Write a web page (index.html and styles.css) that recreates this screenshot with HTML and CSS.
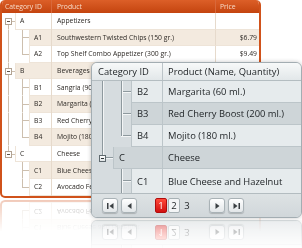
FILE: index.html
```html
<!DOCTYPE html>
<html>
  <head>
    <meta charset="utf-8">
    <meta name="viewport" content="width=device-width,initial-scale=1.0">
    <title>Hierarchical grid</title>
    <link rel="stylesheet" href="styles.css">
  </head>

  <body>
    <div class="stage">

      <!-- Orange grid (back) -->
      <div class="orders">
        <div class="o-head">
          <div class="o-hcell">Category ID</div>
          <div class="o-hcell">Product</div>
          <div class="o-hcell">Price</div>
        </div>
        <div class="o-body">
          <div class="o-row">
            <div class="o-cat"><span class="ind rb cn"><i class="exp"></i></span><span class="key">A</span></div>
            <div class="o-prod">Appetizers</div>
            <div class="o-price"></div>
          </div>
          <div class="o-row">
            <div class="o-cat"><span class="ind l1 rt rb ct cb br"></span><span class="key">A1</span></div>
            <div class="o-prod">Southwestern Twisted Chips (150 gr.)</div>
            <div class="o-price">$6.79</div>
          </div>
          <div class="o-row">
            <div class="o-cat"><span class="ind l1 rt rb ct br"></span><span class="key">A2</span></div>
            <div class="o-prod">Top Shelf Combo Appetizer (300 gr.)</div>
            <div class="o-price">$9.49</div>
          </div>
          <div class="o-row">
            <div class="o-cat"><span class="ind rt rb cn"><i class="exp"></i></span><span class="key">B</span></div>
            <div class="o-prod">Beverages</div>
            <div class="o-price"></div>
          </div>
          <!-- rows below are mostly covered by the front grid -->
          <div class="o-row">
            <div class="o-cat"><span class="ind l1 rt rb ct cb br"></span><span class="key">B1</span></div>
            <div class="o-prod">Sangria (90 ml.)</div>
            <div class="o-price"></div>
          </div>
          <div class="o-row">
            <div class="o-cat"><span class="ind l1 rt rb ct cb br"></span><span class="key">B2</span></div>
            <div class="o-prod">Margarita (60 ml.)</div>
            <div class="o-price"></div>
          </div>
          <div class="o-row">
            <div class="o-cat"><span class="ind l1 rt rb ct cb br"></span><span class="key">B3</span></div>
            <div class="o-prod">Red Cherry Boost (200 ml.)</div>
            <div class="o-price"></div>
          </div>
          <div class="o-row">
            <div class="o-cat"><span class="ind l1 rt rb ct br"></span><span class="key">B4</span></div>
            <div class="o-prod">Mojito (180 ml.)</div>
            <div class="o-price"></div>
          </div>
          <div class="o-row">
            <div class="o-cat"><span class="ind rt cn"><i class="exp"></i></span><span class="key">C</span></div>
            <div class="o-prod">Cheese</div>
            <div class="o-price"></div>
          </div>
          <div class="o-row">
            <div class="o-cat"><span class="ind l1 ct cb br"></span><span class="key">C1</span></div>
            <div class="o-prod">Blue Cheese and Hazelnut</div>
            <div class="o-price"></div>
          </div>
          <div class="o-row">
            <div class="o-cat"><span class="ind l1 ct br"></span><span class="key">C2</span></div>
            <div class="o-prod">Avocado Feta Spread</div>
            <div class="o-price"></div>
          </div>
        </div>
      </div>

      <!-- Gray grid (front) -->
      <div class="grid">
        <div class="g-head">
          <div class="g-hcell">Category ID</div>
          <div class="g-hcell">Product (Name, Quantity)</div>
        </div>
        <div class="g-body">
          <div class="g-row">
            <div class="g-cat"><span class="gind l1 rt rb ct cb br"></span><span class="gkey">B2</span></div>
            <div class="g-prod">Margarita (60 ml.)</div>
          </div>
          <div class="g-row">
            <div class="g-cat"><span class="gind l1 rt rb ct cb br"></span><span class="gkey">B3</span></div>
            <div class="g-prod">Red Cherry Boost (200 ml.)</div>
          </div>
          <div class="g-row">
            <div class="g-cat"><span class="gind l1 rt rb ct br"></span><span class="gkey">B4</span></div>
            <div class="g-prod">Mojito (180 ml.)</div>
          </div>
          <div class="g-row">
            <div class="g-cat"><span class="gind rt cn"><i class="gexp"></i></span><span class="gkey">C</span></div>
            <div class="g-prod">Cheese</div>
          </div>
          <div class="g-row last">
            <div class="g-cat"><span class="gind l1 ct cb br"></span><span class="gkey">C1</span></div>
            <div class="g-prod">Blue Cheese and Hazelnut</div>
          </div>
        </div>
        <div class="pager">
          <span class="pbtn">
            <svg width="7" height="6" viewBox="0 0 7 6"><rect x="0" y="0" width="1.5" height="6"/><path d="M6.5 0 L2.5 3 L6.5 6z"/></svg>
          </span>
          <span class="pbtn">
            <svg width="5" height="6" viewBox="0 0 5 6"><path d="M4.5 0 L0.5 3 L4.5 6z"/></svg>
          </span>
          <span class="pages">
            <span class="page cur">1</span>
            <span class="page hover">2</span>
            <span class="page">3</span>
          </span>
          <span class="pbtn next">
            <svg width="5" height="6" viewBox="0 0 5 6"><path d="M0.5 0 L4.5 3 L0.5 6z"/></svg>
          </span>
          <span class="pbtn">
            <svg width="7" height="6" viewBox="0 0 7 6"><path d="M0.5 0 L4.5 3 L0.5 6z"/><rect x="5.5" y="0" width="1.5" height="6"/></svg>
          </span>
        </div>
      </div>

    </div>
  </body>
</html>
```

FILE: styles.css
```css
body { margin: 0; background: #fff; font-family: "Open Sans", "Noto Sans", sans-serif; }

.stage {
  display: grid;
  width: 302px;
  height: 248px;
  overflow: hidden;
}
.orders, .grid { grid-area: 1 / 1; align-self: start; justify-self: start; }

/* Orange grid */
.orders {
  width: 261px;
  box-sizing: border-box;
  border: 2px solid #d0521b;
  border-top: 0;
  border-radius: 5px;
  overflow: hidden;
  background: #fff;
  font-size: 6.8px;
  color: #2e2a26;
  -webkit-box-reflect: below 2px linear-gradient(transparent 84%, rgba(255,255,255,0.3));
}
.o-head {
  display: grid;
  grid-template-columns: 50px 164px 43px;
  height: 13px;
  background: linear-gradient(#dc5f28, #c4440f);
  color: #f7dbc8;
}
.o-hcell { display: flex; align-items: center; padding-left: 5px; border-right: 1px solid #d9683a; }
.o-hcell:first-child { padding-left: 3px; }
.o-hcell:last-child { padding-left: 4px; border-right: 0; }

.o-row {
  display: grid;
  grid-template-columns: 50px 164px 43px;
  height: 16.6px;
}
.o-cat { display: flex; border-right: 1px solid #e6dacc; }
.o-prod, .o-price, .key {
  display: flex;
  align-items: center;
  border-bottom: 1px solid #eee4d8;
  box-sizing: border-box;
}
.o-prod { padding-left: 5px; border-right: 1px solid #e6dacc; white-space: nowrap; overflow: hidden; }
.o-price { justify-content: flex-end; padding-right: 2px; }
.key { flex: 1; padding-left: 4px; border-left: 1px solid #eee4d8; }
.o-row:nth-child(even) .key,
.o-row:nth-child(even) .o-prod,
.o-row:nth-child(even) .o-price { background: #f3eadf; }

/* tree lines, switched on per row */
.ind, .gind {
  flex: none;
  display: flex;
  align-items: center;
  background-image: var(--rt, none), var(--rb, none), var(--ct, none), var(--cb, none), var(--br, none), var(--cn, none);
  background-repeat: no-repeat;
}
.rt { --rt: var(--lv); }
.rb { --rb: var(--lv); }
.ct { --ct: var(--lv); }
.cb { --cb: var(--lv); }
.br { --br: var(--lh); }
.cn { --cn: var(--lh); }

.ind {
  --lv: linear-gradient(#cdbfae, #cdbfae);
  --lh: linear-gradient(#cdbfae, #cdbfae);
  width: 13px;
  padding-left: 3px;
  box-sizing: border-box;
  background-position: 6px 0, 6px 100%, 20px 0, 20px 100%, 20px 50%, 10px 50%;
  background-size: 1px 50%, 1px 50%, 1px 50%, 1px 50%, 7px 1px, 3px 1px;
}
.ind.l1 { width: 27px; }
.exp {
  width: 7px;
  height: 7px;
  box-sizing: border-box;
  border: 1px solid #b2a393;
  background: linear-gradient(#5a5148, #5a5148) center / 3px 1px no-repeat, #fff;
}

/* Gray grid */
.grid {
  margin: 62px 0 0 91px;
  width: 211px;
  box-sizing: border-box;
  border: 1px solid #a3adb2;
  border-radius: 6px;
  overflow: hidden;
  background: #e5eaec;
  box-shadow: 0 0 4px rgba(0, 0, 0, 0.22);
  font-size: 9.4px;
  color: #1d2124;
  -webkit-box-reflect: below 2px linear-gradient(transparent 80%, rgba(255,255,255,0.45));
}
.g-head {
  display: grid;
  grid-template-columns: 71px 1fr;
  height: 18px;
  box-sizing: border-box;
  background: linear-gradient(#f7f9f9, #e2e7e9);
  border-bottom: 1px solid #b4bdc1;
}
.g-hcell { display: flex; align-items: center; padding-left: 5px; }
.g-hcell:first-child { padding-left: 6px; border-right: 1px solid #bcc4c8; }

.g-row {
  display: grid;
  grid-template-columns: 71px 1fr;
  height: 22px;
}
.g-row.last { height: 24px; }
.g-cat { display: flex; background: #d6dcdf; }
.gkey, .g-prod {
  display: flex;
  align-items: center;
  box-sizing: border-box;
  border-bottom: 1px solid #bcc5c9;
}
.gkey { flex: 1; padding-left: 5px; border-left: 1px solid #bcc5c9; border-right: 1px solid #bcc5c9; background: #e6ebed; }
.g-prod { padding-left: 5px; background: #e6ebed; white-space: nowrap; }
.g-row.last .gkey, .g-row.last .g-prod { border-bottom: 0; }
.g-row:nth-child(even) .gkey,
.g-row:nth-child(even) .g-prod { background: #ced5d8; }

.gind {
  --lv: linear-gradient(to right, #8e999e 50%, #f3f5f6 50%);
  --lh: linear-gradient(#8e999e 50%, #f3f5f6 50%);
  width: 21px;
  padding-left: 7px;
  box-sizing: border-box;
  background-position: 10px 0, 10px 100%, 29px 0, 29px 100%, 29px 50%, 14px 50%;
  background-size: 2px 50%, 2px 50%, 2px 50%, 2px 50%, 10px 2px, 7px 2px;
}
.gind.l1 { width: 39px; }
.gexp {
  width: 7px;
  height: 7px;
  box-sizing: border-box;
  border: 1px solid #5f696e;
  background: linear-gradient(#2c3134, #2c3134) center / 3px 1px no-repeat, linear-gradient(#fff, #dfe4e6);
}

/* Pager */
.pager {
  display: flex;
  align-items: center;
  height: 24px;
  box-sizing: border-box;
  padding-left: 10px;
  border-top: 1px solid #b3bcc0;
  background: linear-gradient(#dde2e4, #d1d7da);
}
.pbtn {
  display: flex;
  align-items: center;
  justify-content: center;
  width: 16px;
  height: 15px;
  box-sizing: border-box;
  margin-right: 3px;
  border: 1px solid #a9b2b6;
  border-radius: 3px;
  background: linear-gradient(#ffffff, #e2e6e8);
  box-shadow: 0 1px 1px rgba(0, 0, 0, 0.18);
  fill: #3a3f42;
}
.pages { display: flex; gap: 1px; margin: 0 16px 0 15px; }
.page {
  display: flex;
  align-items: center;
  justify-content: center;
  width: 12px;
  height: 15px;
  box-sizing: border-box;
  font-size: 9.5px;
  border: 1px solid transparent;
  border-radius: 2px;
}
.page.cur { color: #fff; background: linear-gradient(#ff4a3a, #d20f0f); border-color: #b00c0c; }
.page.hover { background: #f3f5f6; border-color: #a7b1b5; }
```
